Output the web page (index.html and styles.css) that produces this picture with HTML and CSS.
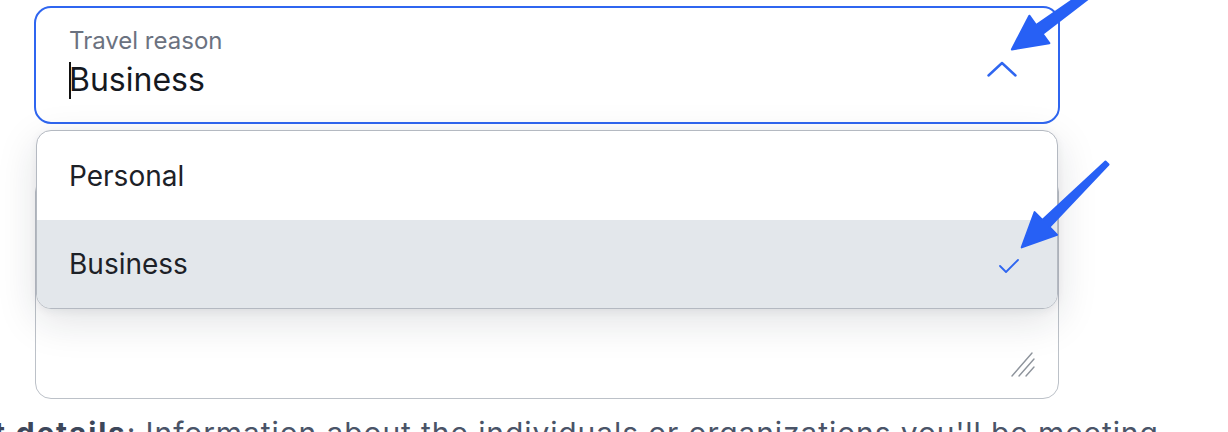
FILE: index.html
```html
<!DOCTYPE html>
<html lang="en">
<head>
<meta charset="utf-8">
<title>Travel reason</title>
<link rel="stylesheet" href="styles.css">
</head>
<body>
<div class="page">
  <div class="field">
    <div class="select">
      <div class="select-text">
        <div class="select-label">Travel reason</div>
        <div class="select-value"><span class="caret"></span>Business</div>
      </div>
      <svg class="chevron" width="30" height="16" viewBox="0 0 30 16">
        <polyline points="1.5,14.5 15,2 28.5,14.5" fill="none" stroke="#2f66f0" stroke-width="2.4" stroke-linecap="round" stroke-linejoin="round"/>
      </svg>
    </div>
    <ul class="dropdown">
      <li class="option">Personal</li>
      <li class="option option-selected">Business
        <svg class="check" width="24" height="16" viewBox="0 0 24 16">
          <polyline points="3,8 9,14 21,2" fill="none" stroke="#2f66f0" stroke-width="1.8" stroke-linecap="round" stroke-linejoin="round"/>
        </svg>
      </li>
    </ul>
  </div>
  <div class="textarea">
    <svg class="resize" width="26" height="28" viewBox="0 0 26 28">
      <line x1="2" y1="26" x2="22" y2="3" stroke="#8e949c" stroke-width="1.4" stroke-linecap="round"/>
      <line x1="9" y1="26" x2="24" y2="9" stroke="#8e949c" stroke-width="1.4" stroke-linecap="round"/>
      <line x1="16" y1="26" x2="24" y2="17" stroke="#8e949c" stroke-width="1.4" stroke-linecap="round"/>
    </svg>
  </div>
</div>
<p class="note"><strong>t details</strong>: Information about the individuals or organizations you'll be meeting</p>
<svg class="annotations" width="1228" height="432" viewBox="0 0 1228 432">
  <g transform="translate(1117,-27) rotate(144)">
    <polygon points="0,-3 96,-5.5 96,-17 130,0 96,17 96,5.5 0,3" fill="#2760f5" stroke="#2760f5" stroke-width="2" stroke-linejoin="round"/>
  </g>
  <g transform="translate(1107,163) rotate(135.3)">
    <polygon points="0,-2.2 86,-5 86,-16 120,0 86,16 86,5 0,2.2" fill="#2760f5" stroke="#2760f5" stroke-width="2" stroke-linejoin="round"/>
  </g>
</svg>
</body>
</html>
```

FILE: styles.css
```css
* { box-sizing: border-box; }
html, body { margin: 0; padding: 0; background: #ffffff; }
body {
  width: 1228px;
  height: 432px;
  overflow: hidden;
  position: relative;
  font-family: Inter, "Noto Sans", "Liberation Sans", sans-serif;
}
.page {
  padding: 6px 0 0 34px;
  width: 1060px;
}
.field { position: relative; }
.select {
  height: 118px;
  border: 2px solid #2f66f0;
  border-radius: 17px;
  padding: 19px 41px 0 33px;
  display: flex;
  align-items: flex-start;
  justify-content: space-between;
  background: #fff;
}
.select-text { display: flex; flex-direction: column; }
.select-label {
  font-size: 24px;
  line-height: 28px;
  color: #6b7280;
}
.select-value {
  font-size: 32px;
  line-height: 40px;
  color: #15191f;
  margin-top: 5px;
  display: flex;
  align-items: center;
}
.caret {
  display: inline-block;
  width: 2px;
  height: 37px;
  background: #111;
  margin-right: -2px;
}
.chevron { display: block; margin-top: 34px; }
.dropdown {
  position: absolute;
  top: 124px;
  left: 2px;
  right: 2px;
  margin: 0;
  padding: 0;
  list-style: none;
  background: #fff;
  border: 1px solid #b4b9c1;
  border-radius: 15px;
  overflow: hidden;
  box-shadow: 0 12px 40px rgba(20, 30, 50, 0.13), 0 2px 8px rgba(20, 30, 50, 0.06);
  z-index: 2;
}
.option {
  height: 89px;
  padding: 0 36px 0 32px;
  display: flex;
  align-items: center;
  justify-content: space-between;
  font-size: 28px;
  color: #1d2127;
}
.option-selected { background: #e3e7eb; height: 88px; }
.check { display: block; margin-top: 4px; }
.textarea {
  position: relative;
  margin: 52px 1px 0 1px;
  height: 223px;
  border: 1px solid #bcc1c8;
  border-radius: 16px;
  background: #fff;
}
.resize { position: absolute; right: 22px; bottom: 20px; }
.note {
  margin: 16px 0 0 0;
  text-indent: -6px;
  font-size: 30px;
  line-height: 36px;
  letter-spacing: 0.9px;
  color: #4a5468;
  white-space: nowrap;
}
.note strong { font-weight: 700; color: #3d475a; letter-spacing: 1.8px; }
.annotations {
  position: absolute;
  top: 0;
  left: 0;
  pointer-events: none;
  z-index: 5;
}
```
